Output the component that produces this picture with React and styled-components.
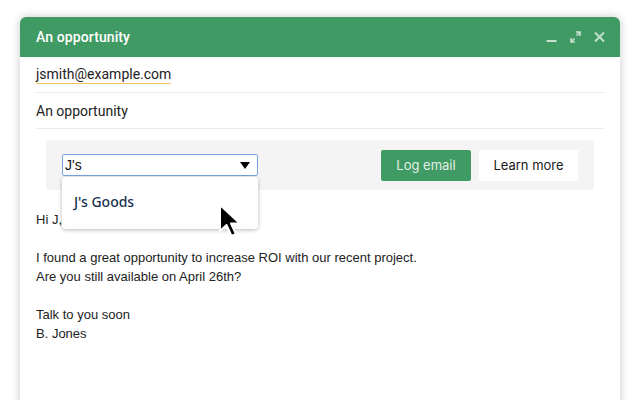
import React from 'react';
import styled, { createGlobalStyle } from 'styled-components';

const Global = createGlobalStyle`
  html, body { margin: 0; padding: 0; background: #fff; }
  body { font-family: Roboto, "Liberation Sans", sans-serif; }
`;

const Page = styled.div`
  width: 640px;
  height: 400px;
  overflow: hidden;
  padding: 17px 0 0 20px;
  box-sizing: border-box;
  position: relative;
`;

const Compose = styled.div`
  width: 600px;
  height: 420px;
  background: #fff;
  border-radius: 6px 6px 0 0;
  box-shadow: 0 0 10px rgba(0, 0, 0, 0.22);
  position: relative;
`;

const Header = styled.div`
  height: 40px;
  background: #3f9a63;
  border-radius: 6px 6px 0 0;
  display: flex;
  align-items: center;
  justify-content: space-between;
  padding: 0 15px 0 16px;
  color: #fff;
`;

const Title = styled.div`
  font-family: Roboto, sans-serif;
  font-weight: 500;
  font-size: 14px;
  letter-spacing: 0.1px;
`;

const Controls = styled.div`
  display: flex;
  align-items: center;
  gap: 13px;
  opacity: 0.7;
`;

const Fields = styled.div`
  padding: 0 16px;
`;

const Field = styled.div`
  height: 35px;
  border-bottom: 1px solid #e8ecf0;
  display: flex;
  align-items: center;
  font-size: 14px;
  color: #222;
`;

const Recipient = styled.span`
  border-bottom: 1px solid #f0c05a;
  line-height: 17px;
  margin-top: 1px;
`;

const Toolbar = styled.div`
  margin: 11px 26px 0;
  height: 50px;
  background: #f4f4f4;
  border-radius: 3px;
  display: flex;
  align-items: center;
  padding: 0 16px;
  gap: 8px;
  position: relative;
`;

const SelectWrap = styled.div`
  position: relative;
  width: 196px;
  margin-right: auto;
`;

const Select = styled.div`
  height: 22px;
  box-sizing: border-box;
  border: 1px solid #7aa3e2;
  border-radius: 2px;
  background: #fff;
  display: flex;
  align-items: center;
  justify-content: space-between;
  padding: 0 7px 0 2px;
  font-family: "Liberation Sans", Arial, sans-serif;
  font-size: 14px;
  color: #111;
`;

const Caret = styled.span`
  width: 0;
  height: 0;
  border-left: 5px solid transparent;
  border-right: 5px solid transparent;
  border-top: 7px solid #000;
`;

const Menu = styled.div`
  position: absolute;
  top: 23px;
  left: 0;
  width: 196px;
  height: 52px;
  background: #fff;
  border-radius: 4px;
  box-shadow: 0 1px 4px rgba(0, 0, 0, 0.28);
  display: flex;
  align-items: center;
  padding-left: 12px;
  box-sizing: border-box;
  z-index: 2;
`;

const Option = styled.span`
  font-family: "Noto Sans", "Open Sans", sans-serif;
  font-size: 14px;
  font-weight: 500;
  color: #1a2f4f;
  margin-top: -3px;
`;

const Button = styled.button`
  height: 31px;
  width: ${p => p.w}px;
  border: none;
  border-radius: 2px;
  font-family: Inter, "Noto Sans", sans-serif;
  font-size: 13px;
  background: ${p => (p.primary ? '#3f9a63' : '#fff')};
  color: ${p => (p.primary ? '#e1efe6' : '#1a1a1a')};
  padding: 0;
`;

const Body = styled.div`
  padding: 20px 16px 0;
  font-family: "Liberation Sans", Arial, sans-serif;
  font-size: 13px;
  line-height: 19px;
  color: #222;
`;

const Line = styled.div`
  height: 19px;
`;

const Pointer = styled.svg`
  position: absolute;
  left: 217px;
  top: 203px;
  z-index: 3;
`;

const lines = [
  'Hi J,',
  '',
  'I found a great opportunity to increase ROI with our recent project.',
  'Are you still available on April 26th?',
  '',
  'Talk to you soon',
  'B. Jones',
];

export default function App() {
  return (
    <>
      <Global />
      <Page>
        <Compose>
          <Header>
            <Title>An opportunity</Title>
            <Controls>
              <svg width="11" height="12" viewBox="0 0 11 12">
                <rect x="0.5" y="9" width="10" height="2" fill="#fff" />
              </svg>
              <svg width="11" height="12" viewBox="0 0 11 12">
                <path d="M6 1h4v4M10 1L6.5 4.5M5 11H1V7M1 11l3.5-3.5" stroke="#fff" strokeWidth="1.6" fill="none" />
              </svg>
              <svg width="11" height="12" viewBox="0 0 11 12">
                <path d="M1 1.5l9 9M10 1.5l-9 9" stroke="#fff" strokeWidth="1.8" />
              </svg>
            </Controls>
          </Header>
          <Fields>
            <Field><Recipient>jsmith@example.com</Recipient></Field>
            <Field>An opportunity</Field>
          </Fields>
          <Toolbar>
            <SelectWrap>
              <Select>
                <span>J's</span>
                <Caret />
              </Select>
              <Menu>
                <Option>J's Goods</Option>
              </Menu>
            </SelectWrap>
            <Button primary w={90}>Log email</Button>
            <Button w={99}>Learn more</Button>
          </Toolbar>
          <Body>
            {lines.map((l, i) => (
              <Line key={i}>{l}</Line>
            ))}
          </Body>
        </Compose>
        <Pointer width="32" height="40" viewBox="0 0 32 40">
          <path d="M3 2 L3 28 L9.5 22 L14.5 33 L19 31 L14 20.5 L23 20.5 Z" fill="#000" stroke="#fff" strokeWidth="2" strokeLinejoin="round" />
        </Pointer>
      </Page>
    </>
  );
}
